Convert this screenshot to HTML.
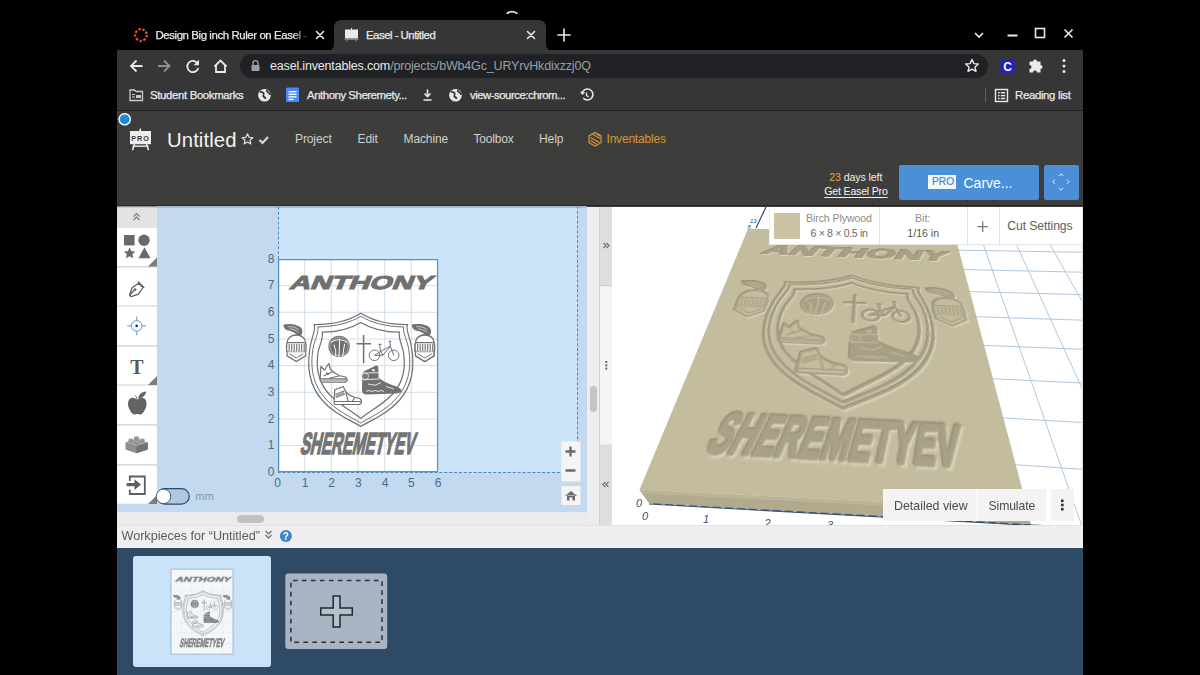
<!DOCTYPE html>
<html><head><meta charset="utf-8">
<style>
*{margin:0;padding:0;box-sizing:border-box}
html,body{width:1200px;height:675px;overflow:hidden;background:#000;font-family:"Liberation Sans",sans-serif}
.a{position:absolute;white-space:nowrap}
.t{line-height:1}
.cw{-webkit-text-stroke:0.25px currentColor}
svg{position:absolute;overflow:visible}
</style></head><body>
<!-- ============ CHROME ============ -->
<!-- top partial avatar -->
<svg style="left:0;top:0" width="600" height="30"><path d="M507.2 13.2Q512 10.2 516.8 13.2" fill="none" stroke="#f0d6dc" stroke-width="1.8" stroke-linecap="round"/></svg>
<!-- tab 1 -->
<svg style="left:0;top:0" width="1200" height="120">
  <circle cx="141" cy="35" r="5.8" fill="none" stroke="#e5533d" stroke-width="2.2" stroke-dasharray="2.4 1.6"/>
  <g stroke="#e8eaed" stroke-width="1.6" stroke-linecap="round">
    <path d="M316.5 31.5l7 7M323.5 31.5l-7 7"/>
  </g>
  <!-- active tab shape -->
  <path d="M326 51 Q334 51 334 43 L334 28 Q334 20 342 20 L538 20 Q546 20 546 28 L546 43 Q546 51 554 51 Z" fill="#363636"/>
  <!-- easel favicon -->
  <g fill="#e8eaed"><rect x="345" y="29.5" width="13" height="9"/><path d="M351 28h1v1.5h-1z"/></g><path d="M344.5 39.2h14M347.5 39l-1 2.5M355.5 39l1 2.5" stroke="#9a9a9a" stroke-width="1"/>
  <g stroke="#e8eaed" stroke-width="1.6" stroke-linecap="round">
    <path d="M527.5 31.5l7 7M534.5 31.5l-7 7"/>
    <path d="M564 29v12M558 35h12"/>
  </g>
  <!-- window controls -->
  <g stroke="#e8eaed" stroke-width="1.6" fill="none">
    <path d="M975 33l4 4 4-4"/>
    <path d="M1007.5 35.5h10" stroke-width="2"/>
    <rect x="1035.5" y="28.5" width="9" height="9"/>
    <path d="M1064.5 29.5l8 8M1072.5 29.5l-8 8"/>
  </g>
</svg>
<div class="a t cw" style="left:155.5px;top:30px;font-size:11.4px;color:#e8eaed;letter-spacing:-0.4px;width:155px;overflow:hidden;-webkit-mask-image:linear-gradient(90deg,#000 88%,transparent)">Design Big inch Ruler on Easel - Sequence</div>
<div class="a t cw" style="left:366px;top:30px;font-size:11.4px;color:#e8eaed;letter-spacing:-0.5px">Easel - Untitled</div>

<!-- toolbar -->
<div class="a" style="left:117px;top:50px;width:966px;height:61px;background:#363636"></div>
<div class="a" style="left:240px;top:54px;width:748px;height:24px;border-radius:12px;background:#202124"></div>
<svg style="left:0;top:0" width="1200" height="120">
  <g stroke="#e8eaed" stroke-width="1.8" fill="none" stroke-linecap="butt">
    <path d="M142.5 66H131M136.5 60.5L131 66l5.5 5.5"/>
    <path d="M158 66h11.5M164 60.5l5.5 5.5-5.5 5.5" stroke="#8e9194"/>
    <path d="M197.6 63.5A5.6 5.6 0 1 0 198.3 68"/>
    <path d="M214.5 66.5L220.5 60.5L226.5 66.5M216 65v7h9v-7"/>
  </g>
  <path d="M199 59.8v5.4h-5.4z" fill="#e8eaed"/>
  <!-- lock -->
  <g fill="#9aa0a6"><rect x="251.5" y="65" width="8" height="6" rx="0.8"/><path d="M253 65v-1.8a2.5 2.5 0 0 1 5 0V65" fill="none" stroke="#9aa0a6" stroke-width="1.3"/></g>
  <!-- star -->
  <path d="M972 59.5l1.9 4.1 4.4.4-3.3 3 1 4.4-4-2.3-4 2.3 1-4.4-3.3-3 4.4-.4z" fill="none" stroke="#e8eaed" stroke-width="1.4" stroke-linejoin="round"/>
  <!-- C extension -->
  <rect x="1000.5" y="59" width="14" height="14" rx="2.5" fill="#2020c8"/>
  <text x="1007.5" y="70.5" font-family="Liberation Sans" font-weight="bold" font-size="12" fill="#fff" text-anchor="middle">C</text>
  <!-- puzzle -->
  <path d="M1029.5 61.5h3.5a2 2 0 0 1 4 0h3.5v3.5a2 2 0 0 1 0 4v3.5h-3.5a2 2 0 0 0-4 0h-3.5v-3.5a2 2 0 0 0 0-4z" fill="#e8eaed"/>
  <g fill="#e8eaed"><circle cx="1064" cy="60.5" r="1.5"/><circle cx="1064" cy="66" r="1.5"/><circle cx="1064" cy="71.5" r="1.5"/></g>
  <!-- bookmarks icons -->
  <path d="M130 90h4.5l1.5 1.5h6.5v9h-12.5z" fill="none" stroke="#c9cbce" stroke-width="1.3"/>
  <g fill="#c9cbce"><rect x="132" y="94" width="3" height="1"/><rect x="132" y="96.5" width="3" height="1"/><rect x="136" y="95" width="5" height="3"/></g>
  <circle cx="264.5" cy="95.3" r="6.3" fill="#e8eaed"/>
  <path d="M260 91.5c1.5 1 2.5 0 3.5 1.5s-1 2.5 0 3.5 2 .5 2 2.5M267 90c-.5 1.5.5 2 1.5 2.5s1.5 1.5 1.5 2.5" fill="none" stroke="#363636" stroke-width="1.8"/>
  <rect x="286" y="87.5" width="13" height="14.5" rx="1.5" fill="#4a8af4"/>
  <g fill="#fff"><rect x="288.5" y="91" width="8" height="1.3"/><rect x="288.5" y="93.6" width="8" height="1.3"/><rect x="288.5" y="96.2" width="8" height="1.3"/><rect x="288.5" y="98.8" width="5" height="1.3"/></g>
  <path d="M427.5 89.5v7M424.5 93.5l3 3 3-3M423.5 100h8" fill="none" stroke="#e8eaed" stroke-width="1.6"/>
  <circle cx="455.5" cy="95.3" r="6.3" fill="#e8eaed"/>
  <path d="M451 91.5c1.5 1 2.5 0 3.5 1.5s-1 2.5 0 3.5 2 .5 2 2.5M458 90c-.5 1.5.5 2 1.5 2.5s1.5 1.5 1.5 2.5" fill="none" stroke="#363636" stroke-width="1.8"/>
  <path d="M582 93.5a5.5 5.5 0 1 1 1.2 4.5" fill="none" stroke="#e8eaed" stroke-width="1.5"/>
  <path d="M580 91.5l2.2 3.5 3-2.5z" fill="#e8eaed"/>
  <path d="M586.5 92.5v3l2 1.5" fill="none" stroke="#e8eaed" stroke-width="1.3"/>
  <path d="M985.5 88v14" stroke="#5f6368" stroke-width="1"/>
  <rect x="995.5" y="89.5" width="12" height="12" fill="none" stroke="#e8eaed" stroke-width="1.4"/>
  <g fill="#e8eaed"><rect x="998" y="92" width="1.6" height="1.4"/><rect x="1000.8" y="92" width="4.4" height="1.4"/><rect x="998" y="94.9" width="1.6" height="1.4"/><rect x="1000.8" y="94.9" width="4.4" height="1.4"/><rect x="998" y="97.8" width="1.6" height="1.4"/><rect x="1000.8" y="97.8" width="4.4" height="1.4"/></g>
</svg>
<div class="a t" style="left:270px;top:59.5px;font-size:12.5px;letter-spacing:-0.17px;color:#e8eaed">easel.inventables.com<span style="color:#9aa0a6">/projects/bWb4Gc_URYrvHkdixzzj0Q</span></div>
<div class="a t cw" style="left:150px;top:90px;font-size:11.4px;letter-spacing:-0.35px;color:#e8eaed">Student Bookmarks</div>
<div class="a t cw" style="left:307px;top:90px;font-size:11.4px;letter-spacing:-0.45px;color:#e8eaed">Anthony Sheremety...</div>
<div class="a t cw" style="left:470px;top:90px;font-size:11.4px;letter-spacing:-0.5px;color:#e8eaed">view-source:chrom...</div>
<div class="a t cw" style="left:1015px;top:90px;font-size:11.4px;letter-spacing:-0.33px;color:#e8eaed">Reading list</div>
<div class="a" style="left:117px;top:110px;width:966px;height:1px;background:#202020"></div>


<!-- ============ EASEL HEADER ============ -->
<div class="a" style="left:117px;top:111px;width:966px;height:96px;background:#3d3e3b"></div>
<svg style="left:0;top:0" width="1200" height="220">
  <defs><pattern id="hp" width="48" height="48" patternUnits="userSpaceOnUse" x="117" y="111">
    <g stroke="#353533" stroke-width="1.6" fill="none">
      <path d="M4 4v18M9 4v18M14 4v18M19 4v18"/>
      <path d="M28 28l16 16M28 36l8 8M36 28l8 8"/>
      <path d="M28 4h16M28 9h16M28 14h16M28 19h16"/>
      <path d="M4 44l16-16M4 36l8-8M12 44l8-8"/>
    </g></pattern></defs>
  <rect x="117" y="111" width="966" height="96" fill="url(#hp)" opacity="0.22"/>
  <!-- easel logo -->
  <path d="M139 131l1.3-3.3 1.3 3.3z" fill="#ededed"/>
  <rect x="130" y="131" width="21" height="13.2" fill="#ededed"/>
  <text x="140.5" y="140.6" font-family="Liberation Sans" font-weight="bold" font-size="7.2" fill="#3a3a3a" text-anchor="middle" letter-spacing="1">PRO</text>
  <path d="M132.5 146.2h16" stroke="#ededed" stroke-width="1.4"/>
  <path d="M134.5 144l-2 6.3M146.5 144l2 6.3" stroke="#ededed" stroke-width="1.5"/>
  <!-- star + check -->
  <path d="M247.5 133.8l1.6 3.5 3.7.4-2.8 2.5.8 3.7-3.3-1.9-3.3 1.9.8-3.7-2.8-2.5 3.7-.4z" fill="none" stroke="#d9d9d9" stroke-width="1.3" stroke-linejoin="round"/>
  <path d="M259.5 140l3 3 5.5-6" fill="none" stroke="#d9d9d9" stroke-width="2.2"/>
  <!-- inventables logo -->
  <g fill="none" stroke="#d8982f" stroke-width="1.2">
    <path d="M595 132.5l6 3.4v6.8l-6 3.4-6-3.4v-6.8z"/>
    <path d="M590.5 137.5l9 5M590.5 140.5l6 3.4M593 134.5l7 4M596.5 134l3.5 2"/>
  </g>
  <!-- blue dot -->
  <circle cx="124.7" cy="119.3" r="6.3" fill="#fff"/>
  <circle cx="124.7" cy="119.3" r="4.9" fill="#1a8ed8"/>
</svg>
<div class="a" style="left:117px;top:204.8px;width:966px;height:1.6px;background:#262626"></div>
<div class="a t" style="left:167px;top:129.5px;font-size:20.3px;color:#f2f2f2;letter-spacing:0.1px">Untitled</div>
<div class="a t" style="left:295px;top:133px;font-size:12px;color:#cfcfcd;letter-spacing:-0.1px">Project</div>
<div class="a t" style="left:357.5px;top:133px;font-size:12px;color:#cfcfcd;letter-spacing:-0.1px">Edit</div>
<div class="a t" style="left:403.5px;top:133px;font-size:12px;color:#cfcfcd;letter-spacing:-0.1px">Machine</div>
<div class="a t" style="left:473.5px;top:133px;font-size:12px;color:#cfcfcd;letter-spacing:-0.2px">Toolbox</div>
<div class="a t" style="left:539px;top:133px;font-size:12px;color:#cfcfcd;letter-spacing:-0.1px">Help</div>
<div class="a t" style="left:606.5px;top:133px;font-size:12px;color:#d8982f;letter-spacing:-0.2px">Inventables</div>
<div class="a t" style="left:829.3px;top:171.5px;font-size:10.6px;color:#f0f0f0;letter-spacing:-0.1px"><span style="color:#e8a33c">23</span> days left</div>
<div class="a t" style="left:824.3px;top:186px;font-size:10.6px;color:#f4f4f4;letter-spacing:-0.2px;text-decoration:underline;text-underline-offset:1.5px">Get Easel Pro</div>
<div class="a" style="left:899px;top:164.5px;width:140px;height:35px;background:#4a8fd8;border-radius:2px"></div>
<div class="a" style="left:927.6px;top:174.6px;width:28.6px;height:14px;background:#f4f8fc"></div>
<div class="a t" style="left:932px;top:177.3px;font-size:10.2px;color:#3f86d2;letter-spacing:0px;-webkit-text-stroke:0.2px #3f86d2">PRO</div>
<div class="a t" style="left:963.5px;top:175.5px;font-size:14px;color:#fff;letter-spacing:0px">Carve...</div>
<div class="a" style="left:1043.5px;top:164.5px;width:35.5px;height:35px;background:#4a8fd8;border-radius:2px"></div>
<svg style="left:0;top:0" width="1200" height="220">
  <g fill="none" stroke="#e6f0fa" stroke-width="1">
    <path d="M1058.8 176l2.2-2.2 2.2 2.2M1058.8 188l2.2 2.2 2.2-2.2M1055 179.5l-2.2 2.2 2.2 2.2M1067 179.5l2.2 2.2-2.2 2.2"/>
  </g>
</svg>

<!-- ============ LEFT TOOLS ============ -->
<div class="a" style="left:117px;top:207px;width:470px;height:305.5px;background:#c2d9ef"></div>
<div class="a" style="left:278px;top:207px;width:299px;height:265px;background:#cce4f9"></div>
<div class="a" style="left:157px;top:206.4px;width:430px;height:1.4px;background:#a8bdd0"></div>
<div class="a" style="left:117px;top:512px;width:495px;height:13.4px;background:#ebebeb"></div>
<div class="a" style="left:236.7px;top:515.1px;width:27px;height:8px;border-radius:4px;background:#c2c2c2"></div>


<svg style="left:0;top:0" width="1200" height="675">
  <rect x="117" y="207" width="40" height="296.6" fill="#fff"/>
  <rect x="117" y="207" width="40" height="21" fill="#e3e3e3"/>
  <rect x="117" y="206.4" width="40" height="1.4" fill="#c9c9c9"/>
  <g fill="none" stroke="#7a7a7a" stroke-width="1.1">
    <path d="M133.5 216.5l3-3 3 3M133.5 220l3-3 3 3"/>
  </g>
  <g stroke="#cfcfcf" stroke-width="1.2">
    <path d="M117 266.8h40M117 306h40M117 345.8h40M117 385h40M117 424.8h40M117 464.8h40"/>
  </g>
  <!-- shapes -->
  <g fill="#6a6a6a">
    <rect x="124" y="235" width="10.6" height="10.4"/>
    <circle cx="144" cy="240.2" r="5.7"/>
    <path d="M129.6 247.5l1.8 3.7 4 .4-3 2.7.9 4-3.7-2.1-3.7 2.1.9-4-3-2.7 4-.4z"/>
    <path d="M144.5 247.3l6 11h-12z"/>
    <path d="M157 257.5v9h-9z" fill="#7d7d7d"/>
    <path d="M157 376v9h-9z" fill="#7d7d7d"/>
    <path d="M157 495v9h-9z" fill="#7d7d7d"/>
  </g>
  <!-- pen -->
  <g fill="none" stroke="#606060" stroke-width="1.3" stroke-linejoin="round">
    <path d="M129.5 295l2.6-7.2 6.6-4.6 4.3 4.3-4.6 6.6-7.2 2.6z"/>
    <path d="M138 281.5l6.2 6.2"/>
    <path d="M129.8 294.8l5-5"/>
  </g>
  <circle cx="135.2" cy="289.5" r="1.2" fill="#606060"/>
  <!-- crosshair -->
  <g fill="none" stroke="#5a9ad8" stroke-width="1">
    <circle cx="136.7" cy="325.9" r="5.3"/>
    <path d="M136.7 316.5v4M136.7 331.2v4M127.3 325.9h4M142 325.9h4"/>
  </g>
  <circle cx="136.7" cy="325.9" r="1.3" fill="#333"/>
  <!-- T -->
  <text x="137" y="373.5" font-family="Liberation Serif" font-weight="bold" font-size="20" fill="#5a5a5a" text-anchor="middle">T</text>
  <!-- apple -->
  <g fill="#636363">
    <path d="M137.3 399.8c-1.8-1.6-4.4-2.8-6.6-1.6c-2.8 1.5-3.2 5.8-2 9.4c1.2 3.6 3.6 7 5.8 7c1.2 0 1.8-.7 2.8-.7s1.6.7 2.8.7c2.2 0 4.6-3.4 5.8-7c1.2-3.6.8-7.9-2-9.4c-2.2-1.2-4.8 0-6.6 1.6z"/>
    <path d="M138.2 398.5c.3-3.8 3.4-6.8 8-7c-.6 4-3.6 6.6-8 7z"/>
  </g>
  <path d="M137.2 399.5c-.2-1.6-.8-2.8-1.8-3.8" stroke="#636363" stroke-width="1" fill="none"/>
  <!-- lego -->
  <g>
    <path d="M125.5 442.5l11-3.5 11.3 3.5v7l-11.3 3.8-11-3.8z" fill="#8e8e8e"/>
    <path d="M125.5 442.5l11 3.8 11.3-3.8-11.3-3.5z" fill="#a2a2a2"/>
    <path d="M136.5 446.3v7l11.3-3.8v-7z" fill="#727272"/>
    <g fill="#8a8a8a"><ellipse cx="131" cy="440.8" rx="2.7" ry="1.5"/><ellipse cx="142" cy="440.8" rx="2.7" ry="1.5"/><ellipse cx="136.5" cy="443" rx="2.7" ry="1.5"/><ellipse cx="136.5" cy="438.6" rx="2.7" ry="1.5"/></g>
    <g fill="#9c9c9c"><ellipse cx="131" cy="439.8" rx="2.7" ry="1.4"/><ellipse cx="142" cy="439.8" rx="2.7" ry="1.4"/><ellipse cx="136.5" cy="442" rx="2.7" ry="1.4"/><ellipse cx="136.5" cy="437.6" rx="2.7" ry="1.4"/></g>
  </g>
  <!-- import -->
  <g fill="none" stroke="#5f5f5f" stroke-width="1.6">
    <path d="M129.8 481v-4.5h15v17.5h-15v-4.5" stroke-width="1.8"/>
    <path d="M126.6 484.6h9" stroke-width="3.2"/>
  </g>
  <path d="M134.5 479.3l6.5 5.3-6.5 5.3z" fill="#5f5f5f"/>
</svg>

<!-- ============ CANVAS ============ -->
<svg style="left:0;top:0" width="1200" height="675">
  <!-- workpiece -->
  <rect x="278" y="259" width="160" height="213" fill="#fff"/>
  <g stroke="#d2deea" stroke-width="1">
    <path d="M304.7 259v213M331.3 259v213M358 259v213M384.7 259v213M411.3 259v213"/>
    <path d="M278 285.6h160M278 312.3h160M278 339h160M278 365.6h160M278 392.3h160M278 419h160M278 445.6h160"/>
  </g>
  <rect x="278.6" y="259.6" width="159" height="212" fill="none" stroke="#5b93c8" stroke-width="1.3"/>
  <!-- dashed selection -->
  <g fill="none" stroke="#4f86ba" stroke-width="1" stroke-dasharray="3 1.9">
    <path d="M278.5 207v265.5H577.5V207"/>
  </g>
  <!-- axis labels -->
  <g font-family="Liberation Sans" font-size="12" fill="#4d6a86" text-anchor="middle">
    <text x="271.2" y="262.5">8</text><text x="271.2" y="289">7</text><text x="271.2" y="315.8">6</text>
    <text x="271.2" y="342.5">5</text><text x="271.2" y="369">4</text><text x="271.2" y="395.8">3</text>
    <text x="271.2" y="422.5">2</text><text x="271.2" y="449">1</text><text x="271.2" y="475.5">0</text>
    <text x="277.6" y="487">0</text><text x="305" y="487">1</text><text x="331.5" y="487">2</text>
    <text x="358.4" y="487">3</text><text x="385" y="487">4</text><text x="411.4" y="487">5</text><text x="438" y="487">6</text>
  </g>
  
  <g id="art">
  <text x="0" y="0" transform="translate(288.8,289.4) skewX(-22) scale(1.45,1)" font-family="Liberation Sans" font-weight="bold" font-size="18.8" fill="#707070" stroke="#707070" stroke-width="1" textLength="98" lengthAdjust="spacingAndGlyphs">ANTHONY</text>
  <text x="0" y="0" transform="translate(299.5,453.5) skewX(-12) scale(0.6,1)" font-family="Liberation Sans" font-weight="bold" font-size="30.5" fill="#747474" stroke="#747474" stroke-width="1.6" textLength="190" lengthAdjust="spacingAndGlyphs">SHEREMETYEV</text>
  <!-- shield -->
  <g fill="none" stroke="#707070">
    <path stroke-width="1.2" d="M360.8 313.2C350 320 335 324.5 314.2 324.6C316 328 313 334 310.5 345C306.5 365 309 385 322 400C333 413 348 419 360.8 426.4C373.6 419 388.6 413 399.6 400C412.6 385 415 365 411.1 345C408.6 334 405.6 328 407.4 324.6C386.6 324.5 371.6 320 360.8 313.2Z"/>
    <path stroke-width="1" d="M360.8 316.2C350.5 322.5 337 326.5 317.8 327C319 331 316 337 313.5 346C309.8 365 312 383 324.5 397.5C335 410 349 416 360.8 423C372.6 416 386.6 410 397.1 397.5C409.6 383 411.8 365 408.1 346C405.6 337 402.6 331 403.8 327C384.6 326.5 371.1 322.5 360.8 316.2Z"/>
    <path stroke-width="1.2" d="M360.8 322.4C351.5 328 339.5 332 322.2 332.2C323.5 337 321 342 318.5 350C315.5 366 317.5 381 328.5 393.5C338 404 350 410 360.8 418.4C371.6 410 383.6 404 393.1 393.5C404.1 381 406.1 366 403.1 350C400.6 342 398.1 337 399.4 332.2C382.1 332 370.1 328 360.8 322.4Z"/>
  </g>
  <!-- basketball -->
  <circle cx="339.1" cy="346.4" r="10.7" fill="#707070"/>
  <g fill="none" stroke="#fff" stroke-width="1">
    <path d="M330.8 342.6Q339 336.5 347.4 342.6"/>
    <path d="M333.8 344.5Q336.5 350 335.8 356.5"/>
    <path d="M339.6 338.5Q339.6 348 338.8 357.2"/>
    <path d="M344.6 343.8Q343.5 350 342.6 356.6"/>
  </g>
  <circle cx="339.1" cy="346.4" r="9.3" fill="none" stroke="#fff" stroke-width="0.7" opacity="0.6"/>
  <!-- cross -->
  <path d="M363.6 334.9v28.4M356.5 343.8h14.6" stroke="#707070" stroke-width="1.5"/>
  <!-- bike -->
  <g fill="none" stroke="#707070" stroke-width="1">
    <circle cx="374.5" cy="355.3" r="5.3"/><circle cx="393.7" cy="355.3" r="5.3"/>
    <path d="M374.5 355.3L381 351.2L382.8 355.3ZM381 351.2L390.5 346.2M382.8 355.3L390.5 346.5L393.7 355.3M390.5 346.5L389.9 341.4M388.6 341.4h2.6M380.4 351L379.8 344.6M378.2 344.3h3.4"/>
  </g>
  <!-- sneaker 1 -->
  <path d="M320.8 366.5L324.5 370L328.8 363.5L330.5 369.5Q334 373 339 375.5L345.5 377Q347.5 378.5 346.8 381L345 382.2L321.5 382.2Q320 381.5 320.2 379Z" fill="#fff" stroke="#707070" stroke-width="1.2" stroke-linejoin="round"/>
  <g fill="none" stroke="#707070" stroke-width="1.1"><path d="M320.5 378.8H346.5M323.5 376L333 371.5M329.5 378L339.5 376M326 372.5l3 2"/></g>
  <path d="M321 379.2h25.3v1.5h-25.3z" fill="#9a9a9a"/>
  <!-- sneaker 3 -->
  <path d="M334.8 389.8L343.2 386.5L346.2 392.5Q350 396 355 397.5L360 398.5Q362 400 361.3 403L359.5 404.5L335 404.5Q334 404 334 402Z" fill="#fff" stroke="#707070" stroke-width="1.2" stroke-linejoin="round"/>
  <g fill="none" stroke="#707070" stroke-width="1.1"><path d="M334.5 401.5H361.5M335.5 394.5l9-3.8M345.8 392.5l2.5 9M354.5 397.8l-2.2 3.8"/></g>
  <path d="M335.5 395.5l8.5-3.5 1 2.8-9.2 3.5z" fill="#9a9a9a"/>
  <!-- boot -->
  <path d="M363.5 371.5L376 365.5Q378 365 378.3 367L378.6 378Q384 382 392 385Q401 387.5 401.7 390.5Q401 393 396 393.5L366 394.5Q362 394 362 390L362.2 380Q362 377 363.5 376Z" fill="#707070"/>
  <circle cx="365.2" cy="376.2" r="3.4" fill="#7a7a7a" stroke="#fff" stroke-width="0.6"/>
  <g fill="none" stroke="#fff" stroke-width="0.8"><path d="M364.5 373.2L378.5 372.5M362.5 379.8L379 379M366 391.5q3-2.2 6 0q3-2.2 6 0q3-2.2 6 0M368 384l7 1.2 6-2.5M386 386.5l8 2.5"/></g>
  <rect x="372.2" y="369.2" width="2.4" height="2" fill="#fff"/>
  <!-- knights -->
  <g id="kn">
    <path d="M283.3 324.8C288 323.2 296 323.8 300.2 327C302.8 329 303 332.5 301.2 335.2L297.2 335.4C295.5 332.5 291 330.8 287 330.2C285 329.5 283.8 327.5 283.3 324.8Z" fill="#707070"/>
    <g stroke="#fff" stroke-width="0.6" fill="none"><path d="M287.5 326.8c4-.6 8.5.4 11.5 3.2M289.5 328.8c3 .2 6.5 1.2 9 3.6"/></g>
    <path d="M287 342.8c0-4.6 4-7.8 9.3-7.8s9.3 3.2 9.3 7.8" fill="#fff" stroke="#707070" stroke-width="1.3"/>
    <rect x="286.6" y="342.6" width="19.4" height="9.6" rx="2" fill="#fff" stroke="#707070" stroke-width="1.3"/>
    <g stroke="#707070" stroke-width="1.1"><path d="M289.2 344v7M291.7 344v7M294.2 344v7M296.7 344v7M299.2 344v7M301.7 344v7M304.2 344v7"/></g>
    <path d="M287 352.2v3.6l9.3 5.8 9.3-5.8v-3.6" fill="#fff" stroke="#707070" stroke-width="1.3"/>
    <path d="M289.3 353.8l7 4.2 7-4.2" fill="none" stroke="#707070" stroke-width="1"/>
  </g>
  <use href="#kn" transform="translate(128.5,0)"/>
  </g>
  <use href="#kn" transform="translate(128.5,0)"/>
  </g>

  <!-- zoom buttons -->
  <rect x="561.5" y="441.5" width="19" height="40" fill="#f4f4f4"/>
  <path d="M565.5 451.5h10M570.5 446.5v10M565.5 470.5h10" stroke="#6a6a6a" stroke-width="2.3"/>
  <rect x="561.5" y="486" width="19" height="19" fill="#f4f4f4"/>
  <path d="M565 496l6-5 6 5M567 495.5v5h2.5v-3h3v3h2.5v-5" fill="#6a6a6a"/>
  <!-- unit toggle -->
  <rect x="157.2" y="488.6" width="32" height="15.6" rx="7.8" fill="#b1c9e0" stroke="#2d4a66" stroke-width="1.2"/>
  <circle cx="163.5" cy="496.4" r="7.3" fill="#fff" stroke="#2d4a66" stroke-width="0.9"/>
  <text x="195.3" y="500" font-family="Liberation Sans" font-size="11" fill="#8795a3" letter-spacing="0.3">mm</text>
  <!-- vertical scroll strip -->
  <rect x="587" y="207" width="13" height="318" fill="#ededf0"/>
  <rect x="590" y="386" width="7" height="26" rx="3.5" fill="#c4c4c4"/>
  <!-- collapsed side panel -->
  <rect x="599.5" y="207" width="13.5" height="318" fill="#dedede"/>
  <rect x="599.5" y="286" width="13.5" height="158.5" fill="#f4f4f4"/>
  <rect x="599" y="207" width="1" height="318" fill="#d0d0d0"/>
  <rect x="599.5" y="285" width="13.5" height="1.2" fill="#cfcfcf"/>
  <g fill="none" stroke="#707070" stroke-width="1.2">
    <path d="M603.5 243l2.5 2.5-2.5 2.5M606.5 243l2.5 2.5-2.5 2.5"/>
    <path d="M608.5 482l-2.5 2.5 2.5 2.5M605.5 482l-2.5 2.5 2.5 2.5"/>
  </g>
  <g fill="#6a6a6a"><rect x="605.3" y="361" width="2" height="2"/><rect x="605.3" y="364.3" width="2" height="2"/><rect x="605.3" y="367.6" width="2" height="2"/></g>
</svg>

<!-- ============ 3D VIEW ============ -->
<div class="a" style="left:612px;top:207px;width:471px;height:318px;background:#fff;overflow:hidden">
<svg style="left:0;top:0" width="471" height="318" viewBox="612 207 471 318">
  <defs>
    <filter id="beige" color-interpolation-filters="sRGB" x="-5%" y="-5%" width="110%" height="110%"><feColorMatrix type="matrix" values="0.1961 0 0 0 0.5725  0 0.1961 0 0 0.5412  0 0 0.1751 0 0.4445  0 0 0 1 0"/><feGaussianBlur stdDeviation="0.35"/></filter>
      <filter id="beigeDark" color-interpolation-filters="sRGB" x="-5%" y="-5%" width="110%" height="110%"><feColorMatrix type="matrix" values="0.3922 0 0 0 0.3765  0 0.3922 0 0 0.3451  0 0 0.3501 0 0.2695  0 0 0 1 0"/><feGaussianBlur stdDeviation="0.5"/></filter>
      <filter id="beigeLight" color-interpolation-filters="sRGB" x="-5%" y="-5%" width="110%" height="110%"><feColorMatrix type="matrix" values="-0.1821 0 0 0 0.9507  0 -0.1961 0 0 0.9333  0 0 -0.2521 0 0.8717  0 0 0 1 0"/><feGaussianBlur stdDeviation="0.5"/></filter>
  </defs>
  <path d="M1026.5 553.3L934.3 178.8M1093.5 559.2L960.3 178.8M1162.7 565.4L986.5 178.8M1234.2 571.7L1013.1 178.9M1308.0 578.3L1040.0 178.9M1384.3 585.1L1067.3 178.9M1463.3 592.1L1094.9 178.9M1545.0 599.3L1122.9 178.9M1629.6 606.8L1151.3 178.9M1717.3 614.6L1180.0 178.9M1808.2 622.7L1209.1 178.9M1902.5 631.1L1238.6 179.0M1004.5 464.0L1808.1 518.7M993.0 417.4L1712.6 458.6M983.4 378.3L1634.8 409.6M975.2 345.0L1570.2 368.9M968.2 316.4L1515.7 334.6M962.0 291.4L1469.1 305.3M956.6 269.4L1428.8 279.9M951.8 250.0L1393.6 257.8M947.6 232.7L1362.6 238.3M943.8 217.1L1335.1 220.9M940.3 203.1L1310.5 205.5M937.2 190.4L1288.4 191.6" stroke="#b0c8e0" stroke-width="1" fill="none"/>
  <rect x="1081.5" y="207" width="1.5" height="318" fill="#e6e6e6"/>
  <!-- y axis -->
  <path d="M756 228L766 207" stroke="#2c4a6a" stroke-width="1.2"/>
  <text x="750" y="223" font-family="Liberation Sans" font-style="italic" font-size="6" fill="#2c4a6a">13</text>
  <text x="747.5" y="229" font-family="Liberation Sans" font-style="italic" font-size="6" fill="#2c4a6a">8</text>
  <!-- board front face -->
  <path d="M639.5 489.8L1027.6 509.2L1031 525.5L649 503.3Z" fill="#b2aa8c"/>
  <path d="M639.5 489.8L1027.6 509.2L1028.5 513L642 493.5Z" fill="#bcb497"/>
  <!-- board top -->
  <path d="M748 228.8L954.3 232.9L1027.6 509.2L639.5 489.8Z" fill="#c4bc9e"/>
  <!-- axis line bottom -->
  <path d="M649 503.8L1083 528" stroke="#34506e" stroke-width="1.6"/>
  <path d="M649 503.3L1083 527.5" stroke="#b9c6d2" stroke-width="0.8" stroke-dasharray="4 8"/>
  <g font-family="Liberation Sans" font-style="italic" font-size="11" fill="#34506e" text-anchor="middle">
    <text x="639" y="506.5">0</text><text x="645" y="520">0</text><text x="706" y="523">1</text>
    <text x="767.5" y="526.5">2</text><text x="830" y="529">3</text>
  </g>
</svg>
<div style="position:absolute;left:0;top:0;width:160px;height:213.33px;transform-origin:0 0;transform:matrix3d(1.177081,0.040669468,0,-0.00010674126,-0.61099952,0.54735236,0,-0.0023326179,0,0,1,0,143.54693,26.290059,0,1)">
  <svg style="left:0;top:0" width="160" height="214" viewBox="278 259 160 214">
    <g filter="url(#beigeLight)" transform="translate(0.9,1.2)"><use href="#art"/></g>
    <g filter="url(#beigeDark)" transform="translate(-0.5,-0.7)"><use href="#art"/></g>
    <g filter="url(#beige)"><use href="#art"/></g>
  </svg>
</div>
</div>
<!-- material panel -->
<div class="a" style="left:769px;top:207px;width:313px;height:37.5px;background:#fff;border-bottom:1px solid #e4e4e4;border-left:1px solid #eee"></div>
<div class="a" style="left:774px;top:212.5px;width:26px;height:26px;background:#cbc3a4"></div>
<div class="a" style="left:878.5px;top:207px;width:1px;height:37px;background:#e2e2e2"></div>
<div class="a" style="left:967.3px;top:207px;width:1px;height:37px;background:#e2e2e2"></div>
<div class="a" style="left:998.5px;top:207px;width:1px;height:37px;background:#e2e2e2"></div>
<div class="a t" style="left:806px;top:212.5px;font-size:10.6px;color:#8c8c8c;letter-spacing:-0.1px">Birch Plywood</div>
<div class="a t" style="left:810.5px;top:228px;font-size:10.6px;color:#6a6a6a;letter-spacing:-0.35px">6 × 8 × 0.5 in</div>
<div class="a t" style="left:915px;top:212.5px;font-size:10.6px;color:#8c8c8c">Bit:</div>
<div class="a t" style="left:907.3px;top:228px;font-size:10.6px;color:#555">1/16 in</div>
<svg style="left:0;top:0" width="1200" height="260"><path d="M982.7 221.5v10.5M977.5 226.7h10.5" stroke="#7a7a7a" stroke-width="1.3"/></svg>
<div class="a t" style="left:1007.3px;top:220px;font-size:12.2px;color:#606060;letter-spacing:-0.1px">Cut Settings</div>
<!-- detailed view buttons -->
<div class="a" style="left:883px;top:489px;width:163px;height:32px;background:#f3f3f3"></div>
<div class="a" style="left:977px;top:489px;width:1px;height:32px;background:#fff"></div>
<div class="a" style="left:1050.5px;top:489px;width:23.5px;height:32px;background:#f3f3f3"></div>
<div class="a t" style="left:894px;top:499.5px;font-size:12.4px;color:#4a4a4a;letter-spacing:0px">Detailed view</div>
<div class="a t" style="left:988.5px;top:499.5px;font-size:12.2px;color:#4a4a4a;letter-spacing:-0.1px">Simulate</div>
<svg style="left:0;top:0" width="1200" height="675"><g fill="#333"><rect x="1061" y="499.5" width="2.6" height="2.6"/><rect x="1061" y="503.7" width="2.6" height="2.6"/><rect x="1061" y="507.9" width="2.6" height="2.6"/></g></svg>

<!-- ============ WORKPIECES ============ -->
<div class="a" style="left:117px;top:525px;width:966px;height:23px;background:#efefef;border-top:1px solid #e2e2e2"></div>
<div class="a t" style="left:121.5px;top:529.5px;font-size:12.6px;color:#5a5a5a;letter-spacing:0px">Workpieces for “Untitled”</div>
<svg style="left:0;top:0" width="1200" height="675">
  <path d="M265.5 531l3 3 3-3M265.5 535l3 3 3-3" fill="none" stroke="#666" stroke-width="1.1"/>
  <circle cx="285.9" cy="536" r="6" fill="#3b84c6"/>
  <text x="285.9" y="540" font-family="Liberation Sans" font-weight="bold" font-size="10" fill="#fff" text-anchor="middle">?</text>
</svg>
<div class="a" style="left:117px;top:548px;width:966px;height:127px;background:#2e4a64"></div>
<div class="a" style="left:132.7px;top:556.3px;width:138.6px;height:110.7px;background:#cae3f9;border-radius:3px"></div>
<svg style="left:0;top:0" width="1200" height="675">
  <rect x="171" y="569.1" width="62" height="85" fill="#f4f7fa" stroke="#9db1c6" stroke-width="0.9"/>
  <g stroke="#dde6ee" stroke-width="0.5">
    <path d="M181.3 569v85M191.7 569v85M202 569v85M212.3 569v85M222.7 569v85M171 579.7h62M171 590.3h62M171 601h62M171 611.6h62M171 622.3h62M171 633h62M171 643.6h62"/>
  </g>
  <g transform="translate(171,569.1) scale(0.3875,0.3984) translate(-278,-259)" opacity="0.9">
    <use href="#art"/>
  </g>
  <rect x="285.3" y="573.6" width="101.9" height="75.4" rx="3" fill="#a8b4c1"/>
  <rect x="290.9" y="580.4" width="91.1" height="61.9" fill="none" stroke="#27313c" stroke-width="1.5" stroke-dasharray="4.6 4.4" stroke-dashoffset="-2"/>
  <path d="M333.2 596.1h6.8v12h12.3v6.8h-12.3v12.1h-6.8v-12.1h-12.4v-6.8h12.4z" fill="#b6c1cc" stroke="#1f2830" stroke-width="1.5"/>
</svg>




</body></html>
